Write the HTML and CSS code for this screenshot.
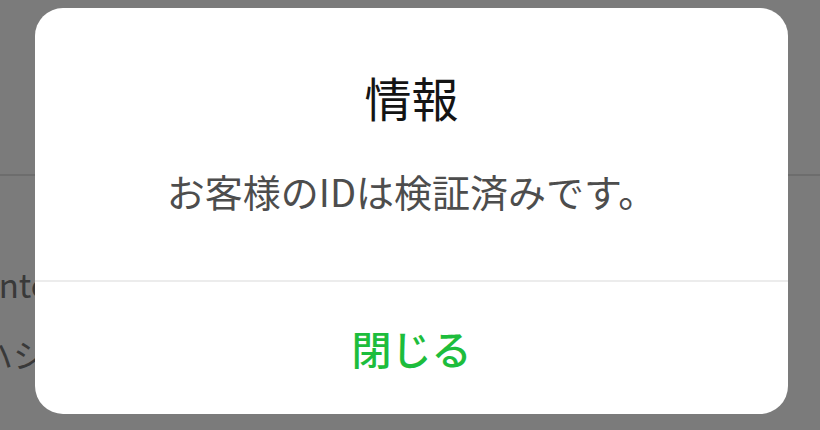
FILE: index.html
```html
<!DOCTYPE html>
<html lang="ja">
<head>
<meta charset="utf-8">
<link rel="stylesheet" href="styles.css">
</head>
<body>
<div class="page">
  <div class="page-header"></div>
  <div class="page-row row-internet">Internet</div>
  <div class="page-row row-kana">ハシ</div>
</div>
<div class="overlay">
  <div class="dialog">
    <div class="dialog-body">
      <div class="dialog-title">情報</div>
      <div class="dialog-message">お客様のIDは検証済みです。</div>
    </div>
    <div class="dialog-actions">
      <button class="dialog-button">閉じる</button>
    </div>
  </div>
</div>
</body>
</html>
```
FILE: styles.css
```css
html, body {
  margin: 0;
  padding: 0;
  width: 820px;
  height: 430px;
  overflow: hidden;
  background: #ffffff;
  font-family: "Noto Sans CJK JP", "Noto Sans", sans-serif;
}

.page {
  display: flex;
  flex-direction: column;
}

.page-header {
  height: 174px;
  border-bottom: 2px solid #e2e2e2;
}

.page-row {
  color: #777777;
  font-size: 33px;
  line-height: 40px;
  white-space: nowrap;
}

.row-internet {
  margin-top: 88px;
  margin-left: -11px;
}

.row-kana {
  margin-top: 30px;
  margin-left: -20px;
}

.overlay {
  position: absolute;
  inset: 0;
  background: rgba(0, 0, 0, 0.518);
  display: flex;
  align-items: flex-start;
  padding: 8px 0 0 35px;
}

.dialog {
  width: 753px;
  height: 406px;
  background: #ffffff;
  border-radius: 28px;
  display: flex;
  flex-direction: column;
  overflow: hidden;
}

.dialog-body {
  height: 274px;
  box-sizing: border-box;
  padding-top: 59px;
  display: flex;
  flex-direction: column;
  align-items: center;
  border-bottom: 2px solid #ececec;
}

.dialog-title {
  font-size: 47px;
  line-height: 60px;
  color: #141414;
}

.dialog-message {
  margin-top: 38px;
  font-size: 38px;
  line-height: 52px;
  color: #4d4d4d;
}

.dialog-actions {
  flex: 1;
  display: flex;
  align-items: center;
  justify-content: center;
}

.dialog-button {
  border: none;
  background: none;
  padding: 0;
  font-family: inherit;
  font-size: 40px;
  font-weight: 500;
  line-height: 56px;
  color: #1dbd3c;
  cursor: pointer;
}
```
